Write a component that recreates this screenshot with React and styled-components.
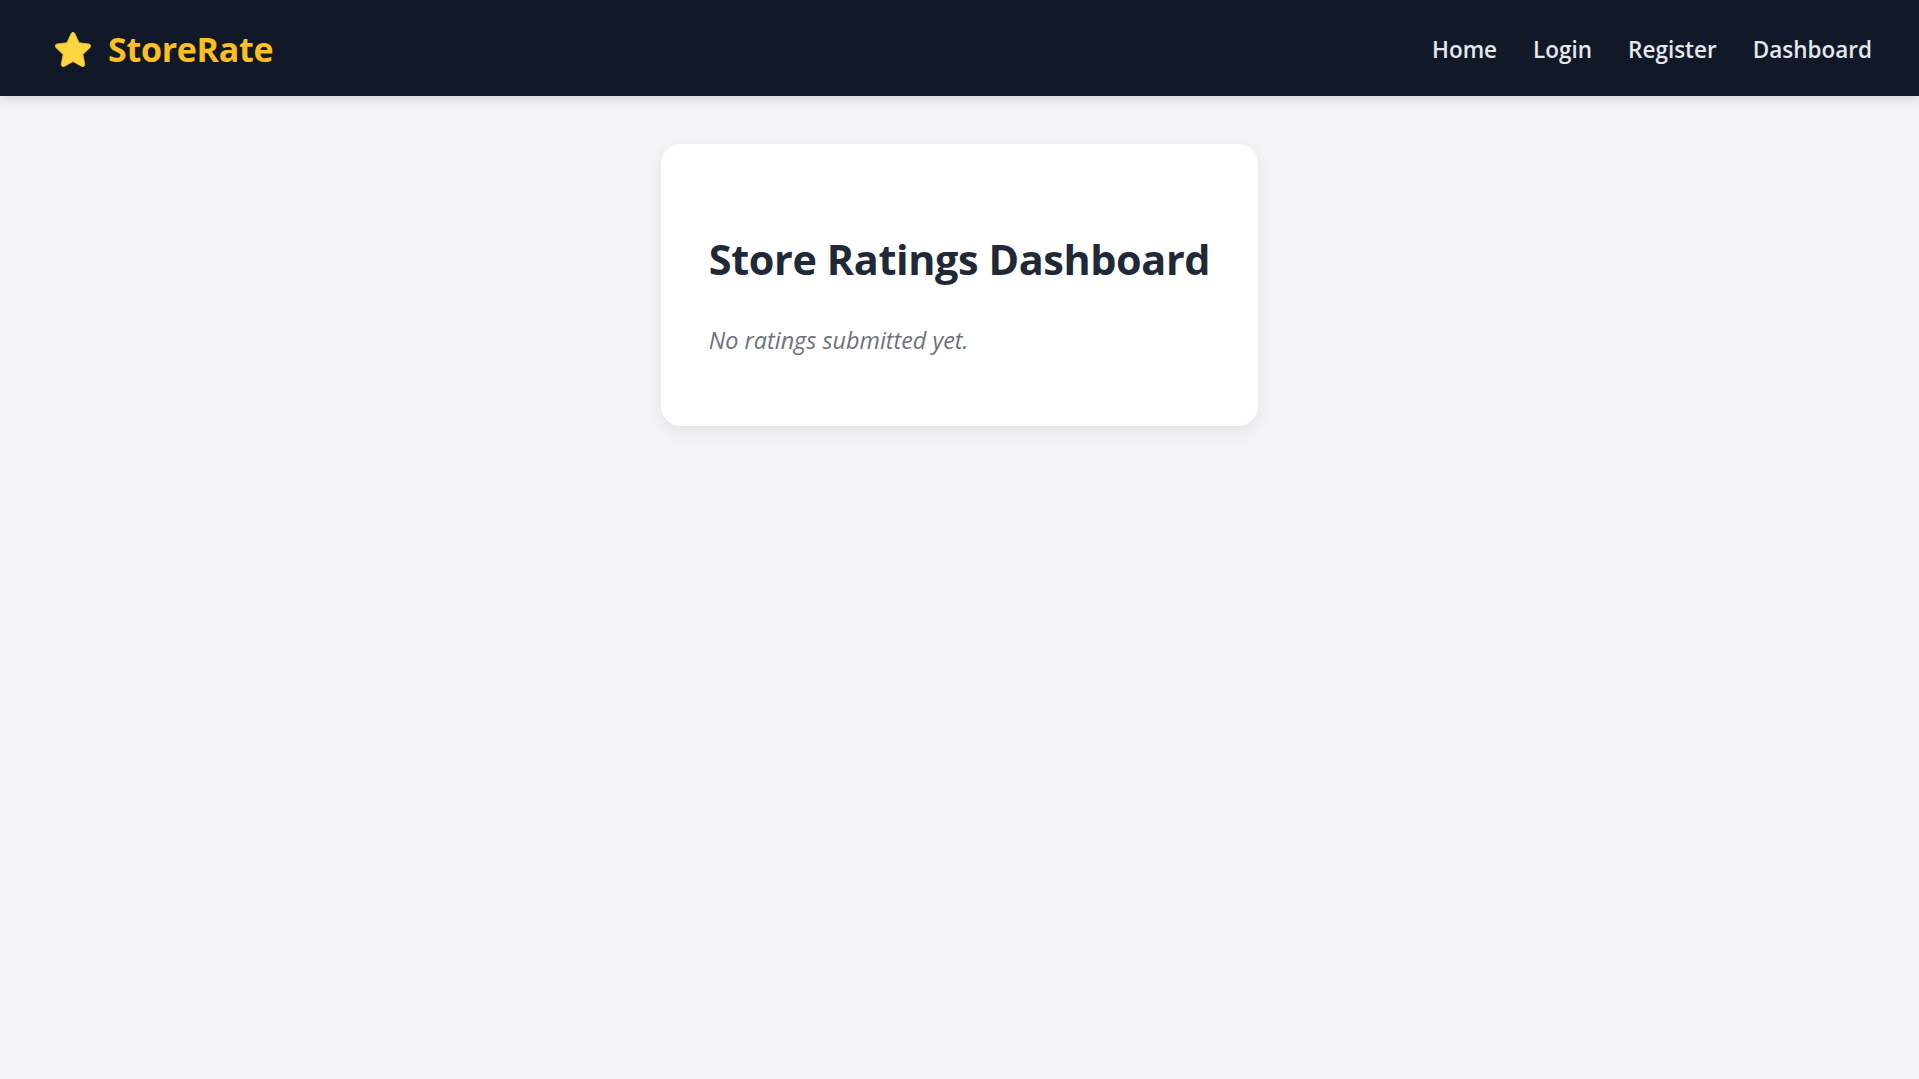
import React from 'react';
import styled, { createGlobalStyle } from 'styled-components';

const GlobalStyle = createGlobalStyle`
  * {
    box-sizing: border-box;
  }
  body {
    margin: 0;
    background-color: #f3f4f6;
    font-family: 'Open Sans', 'Noto Sans', sans-serif;
  }
`;

const Page = styled.div`
  min-height: 100vh;
  background-color: #f3f4f6;
`;

// ------------- шапка ----------------

const Navbar = styled.header`
  display: flex;
  align-items: center;
  justify-content: space-between;
  height: 96px;
  padding: 2px 47px 0 55px;
  background-color: #111827;
  box-shadow: 0 4px 10px rgba(0, 0, 0, 0.12);
`;

const Brand = styled.a`
  display: flex;
  align-items: center;
  gap: 17px;
  text-decoration: none;
  color: #fbbf24;
  font-size: 34px;
  font-weight: 700;
  letter-spacing: -0.3px;
`;

const NavList = styled.nav`
  display: flex;
  align-items: center;
  gap: 36px;
`;

const NavLink = styled.a`
  color: #e5e7eb;
  text-decoration: none;
  font-size: 22.5px;
  font-weight: 600;
  cursor: pointer;
  transition: color 0.2s;

  &:hover {
    color: #fbbf24;
  }
`;

// ------------- карточка ----------------

const Main = styled.main`
  display: flex;
  justify-content: center;
  padding-top: 48px;
`;

const Card = styled.section`
  width: fit-content;
  padding: 89px 48px 69px;
  border-radius: 20px;
  background-color: #ffffff;
  box-shadow: 0 6px 18px rgba(0, 0, 0, 0.07);
`;

const Title = styled.h1`
  margin: 0 0 37px;
  color: #1f2937;
  font-size: 41.4px;
  font-weight: 700;
  line-height: 1.3;
  letter-spacing: -0.4px;
  white-space: nowrap;
`;

const Empty = styled.p`
  margin: 0;
  color: #6b7280;
  font-size: 23.4px;
  font-style: italic;
  line-height: 1.4;
`;

const StarIcon = () => (
  <svg width="36" height="35" viewBox="2.6 2.1 18.8 18.6" aria-hidden="true">
    <path
      d="M11.05 2.9a1.05 1.05 0 0 1 1.9 0l2.3 4.9 5.3.7a1.05 1.05 0 0 1 .6 1.8l-3.9 3.7 1 5.3a1.05 1.05 0 0 1-1.55 1.1L12 17.8l-4.7 2.6a1.05 1.05 0 0 1-1.55-1.1l1-5.3-3.9-3.7a1.05 1.05 0 0 1 .6-1.8l5.3-.7z"
      fill="#fcd53f"
      stroke="#f5c430"
      strokeWidth="0.4"
      strokeLinejoin="round"
    />
  </svg>
);

const links = ['Home', 'Login', 'Register', 'Dashboard'];

export default function App() {
  return (
    <Page>
      <GlobalStyle />
      <Navbar>
        <Brand href="#">
          <StarIcon />
          StoreRate
        </Brand>
        <NavList>
          {links.map(l => (
            <NavLink key={l} href="#">
              {l}
            </NavLink>
          ))}
        </NavList>
      </Navbar>
      <Main>
        <Card>
          <Title>Store Ratings Dashboard</Title>
          <Empty>No ratings submitted yet.</Empty>
        </Card>
      </Main>
    </Page>
  );
}
